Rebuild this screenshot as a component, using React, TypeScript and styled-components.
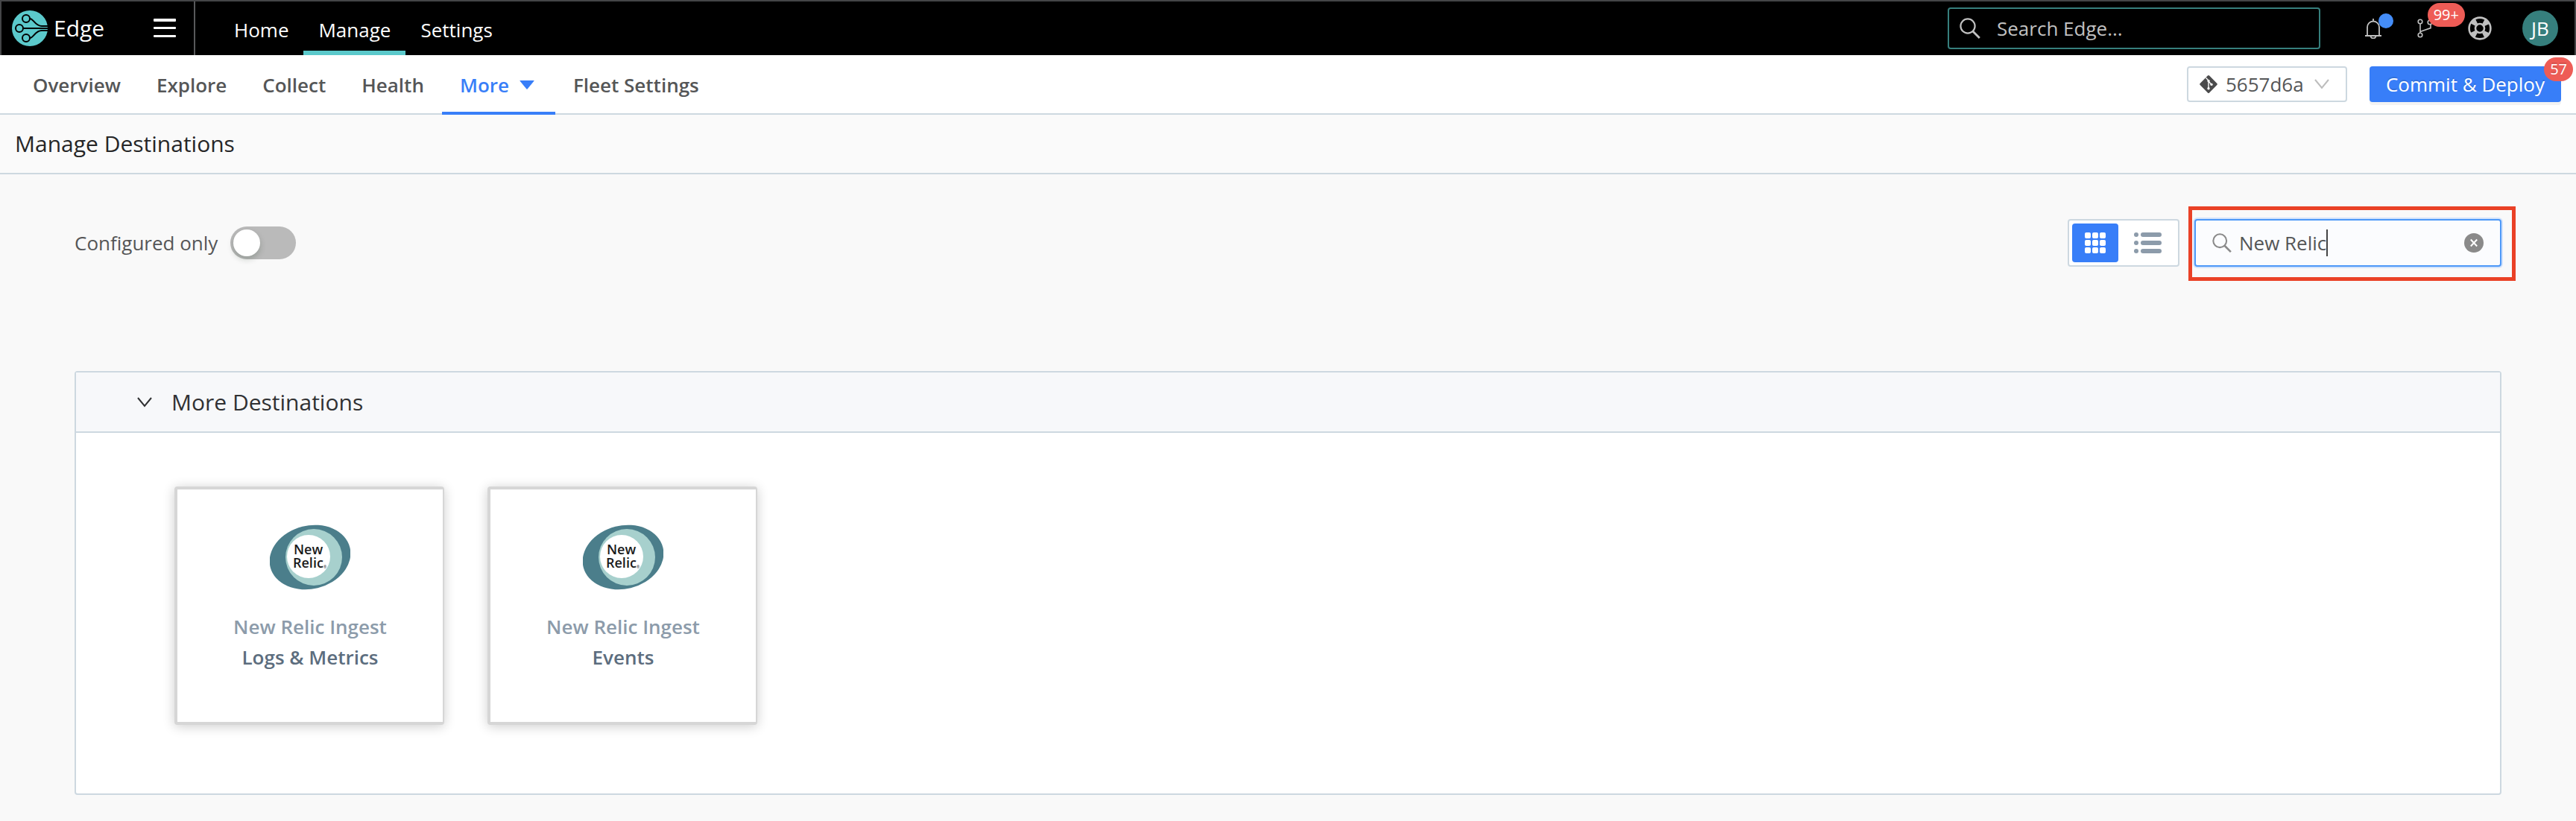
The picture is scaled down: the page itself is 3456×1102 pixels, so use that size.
import React from 'react';
import styled, { createGlobalStyle, css } from 'styled-components';

const color = {
  teal: '#5bc9cb',
  tealDark: '#367f7d',
  blue: '#387ef8',
  line: '#cdd8e0',
  text: '#555657',
  icon: '#c0c0c0',
  red: '#ee5c56',
};

const GlobalStyle = createGlobalStyle`
  *, *::before, *::after { box-sizing: border-box; }
  body {
    margin: 0;
    background: #f9f9f9;
    color: ${color.text};
    font-family: 'Open Sans', 'Noto Sans', sans-serif;
    font-size: 26px;
    line-height: 36px;
  }
  button, input, select { font: inherit; color: inherit; margin: 0; padding: 0; }
  button { cursor: pointer; border: 0; background: none; }
  a { color: inherit; text-decoration: none; }
  svg { display: block; flex: none; }
`;

const TopBar = styled.header`
  display: flex;
  align-items: stretch;
  height: 74px;
  background: #000;
  color: #fff;
  border: 2px solid #444547;
  border-bottom: 0;
`;

const Brand = styled.div`
  display: flex;
  align-items: center;
  justify-content: space-between;
  width: 260px;
  padding: 0 24px 0 14px;
  border-right: 2px solid #58595b;
`;

const BrandLink = styled.a`
  display: flex;
  align-items: center;
  gap: 8px;
  font-size: 30px;
`;

const IconButton = styled.button`
  position: relative;
  display: flex;
  align-items: center;
  justify-content: center;
`;

const MainNav = styled.nav`
  display: flex;
  margin-left: 32px;
`;

const MainLink = styled.a<{ $active?: boolean }>`
  display: flex;
  align-items: center;
  padding: 10px 20px 0;
  border-bottom: 6px solid ${(p) => (p.$active ? color.teal : 'transparent')};
`;

const TopTools = styled.div`
  display: flex;
  align-items: center;
  margin-left: auto;
  padding-right: 22px;
`;

const GlobalSearch = styled.label`
  display: flex;
  align-items: center;
  gap: 22px;
  width: 500px;
  height: 56px;
  padding: 0 14px;
  border: 2px solid ${color.tealDark};
  border-radius: 4px;
  color: ${color.icon};
  input {
    flex: 1;
    min-width: 0;
    border: 0;
    outline: 0;
    background: none;
  }
  input::placeholder { color: inherit; opacity: 1; }
`;

const ToolIcons = styled.div`
  display: flex;
  align-items: center;
  gap: 48px;
  margin: 0 41px 0 60px;
`;

const Dot = styled.span`
  position: absolute;
  top: -6px;
  right: -16px;
  width: 20px;
  height: 20px;
  border-radius: 50%;
  background: #448df8;
`;

const Badge = styled.span<{ $top: number; $right: number }>`
  position: absolute;
  top: ${(p) => p.$top}px;
  right: ${(p) => p.$right}px;
  height: 32px;
  padding: 0 8px;
  border-radius: 16px;
  background: ${color.red};
  color: #fff;
  font-size: 20px;
  line-height: 32px;
`;

const Avatar = styled.button`
  width: 48px;
  height: 48px;
  border-radius: 50%;
  background: ${color.tealDark};
  color: #fff;
`;

const SubBar = styled.div`
  display: flex;
  align-items: stretch;
  justify-content: space-between;
  height: 80px;
  padding: 0 20px;
  background: #fff;
  border-bottom: 2px solid ${color.line};
`;

const Tabs = styled.nav`
  display: flex;
`;

const Tab = styled.a<{ $active?: boolean }>`
  display: flex;
  align-items: center;
  gap: 14px;
  height: 80px;
  padding: 4px 24px 0;
  border-bottom: 4px solid transparent;
  font-weight: 600;
  ${(p) =>
    p.$active &&
    css`
      color: ${color.blue};
      border-color: ${color.blue};
      padding-right: 28px;
    `}
`;

const Actions = styled.div`
  display: flex;
  align-items: center;
  gap: 30px;
`;

const VersionPicker = styled.label`
  display: flex;
  align-items: center;
  gap: 10px;
  width: 215px;
  height: 48px;
  padding: 0 22px 0 14px;
  border: 2px solid ${color.line};
  border-radius: 4px;
  select {
    flex: 1;
    min-width: 0;
    appearance: none;
    border: 0;
    outline: 0;
    background: none;
  }
`;

const Deploy = styled.button`
  position: relative;
  height: 48px;
  padding: 0 22px;
  border-radius: 4px;
  background: ${color.blue};
  color: #fff;
  box-shadow: 0 4px 0 #f3f3f3;
  text-shadow: 0 -2px 0 rgba(0, 0, 0, 0.12);
`;

const TitleBar = styled.div`
  padding: 19px 20px;
  background: #fafafa;
  border-bottom: 2px solid ${color.line};
`;

const PageTitle = styled.h1`
  margin: 0;
  color: #262627;
  font-size: 30px;
  font-weight: 400;
  line-height: 40px;
`;

const Main = styled.main`
  padding: 60px 100px 36px;
`;

const Toolbar = styled.div`
  display: flex;
  align-items: center;
  justify-content: space-between;
  margin-bottom: 140px;
`;

const SwitchLabel = styled.label`
  display: flex;
  align-items: center;
  gap: 17px;
`;

const Switch = styled.input`
  appearance: none;
  display: flex;
  align-items: center;
  width: 88px;
  height: 44px;
  border-radius: 22px;
  background: #bababa;
  cursor: pointer;
  &::before {
    content: '';
    width: 36px;
    height: 36px;
    margin-left: 4px;
    border-radius: 50%;
    background: #fff;
    box-shadow: 0 4px 8px rgba(0, 35, 11, 0.2);
  }
  &:checked { background: ${color.blue}; }
  &:checked::before { margin-left: 48px; }
`;

const ToolGroup = styled.div`
  display: flex;
  align-items: center;
  gap: 20px;
`;

const ViewToggle = styled.div`
  display: flex;
  align-items: center;
  gap: 8px;
  width: 150px;
  height: 64px;
  padding: 4px;
  background: #fff;
  border: 2px solid ${color.line};
  border-radius: 4px;
`;

const ViewButton = styled.button<{ $active?: boolean }>`
  display: flex;
  align-items: center;
  justify-content: center;
  width: 62px;
  height: 52px;
  border-radius: 4px;
  background: ${(p) => (p.$active ? color.blue : 'transparent')};
  color: ${(p) => (p.$active ? '#fff' : '#8c9baa')};
`;

const Highlight = styled.div`
  position: relative;
  &::after {
    content: '';
    position: absolute;
    inset: -17px -19px -19px -8px;
    border: 5px solid #ea4126;
    pointer-events: none;
  }
`;

const Filter = styled.div`
  display: flex;
  align-items: center;
  width: 412px;
  height: 64px;
  padding: 0 22px;
  background: #fbfcfe;
  border: 2px solid #4c98f8;
  border-radius: 4px;
  box-shadow: 0 0 0 2px #d3e3fb;
  > svg { color: #8a8a8a; }
  input {
    field-sizing: content;
    margin-left: 10px;
    border: 0;
    outline: 0;
    background: none;
  }
`;

const Caret = styled.span`
  width: 2px;
  height: 36px;
  background: #444;
`;

const ClearButton = styled(IconButton)`
  margin-left: auto;
`;

const Panel = styled.section`
  background: #fff;
  border: 2px solid ${color.line};
  border-radius: 4px;
`;

const PanelHeader = styled.button`
  display: flex;
  align-items: center;
  gap: 26px;
  width: 100%;
  padding: 20px 82px;
  background: #f7f8fa;
  border-bottom: 2px solid ${color.line};
  color: #303133;
  font-size: 30px;
  line-height: 39px;
`;

const Cards = styled.div`
  display: flex;
  flex-wrap: wrap;
  gap: 58px;
  padding: 72px 132px 92px;
`;

const Card = styled.a`
  display: flex;
  flex-direction: column;
  align-items: center;
  width: 362px;
  height: 320px;
  padding-top: 47px;
  background: #fff;
  border: 4px solid #d6d6d6;
  border-right-width: 2px;
  border-radius: 4px;
  box-shadow: 0 2px 16px rgba(0, 0, 0, 0.2);
  font-weight: 600;
  line-height: 41px;
`;

const CardLogo = styled.div`
  margin-bottom: 29px;
`;

const CardFamily = styled.span`
  color: #8c9baa;
`;

const CardName = styled.span`
  color: #5c6d7e;
`;

const CribLogo = () => (
  <svg width="48" height="48" viewBox="0 0 48 48" aria-hidden="true">
    <circle cx="24" cy="24" r="24" fill={color.teal} />
    <g fill="none" stroke="#000" strokeWidth="2">
      <circle cx="19" cy="11" r="5" />
      <circle cx="10" cy="24" r="5" />
      <circle cx="19" cy="37" r="5" />
      <path d="M24 11c5 0 7 10 16 10h8M24 37c5 0 7-10 16-10h8" />
      <path d="M15 24h33" />
    </g>
  </svg>
);

const MenuIcon = () => (
  <svg width="30" height="26" viewBox="0 0 30 26" aria-hidden="true">
    <g fill="#fff">
      <rect width="30" height="4" rx="1" />
      <rect y="11" width="30" height="3" rx="1" />
      <rect y="22" width="30" height="3" rx="1" />
    </g>
  </svg>
);

const SearchIcon = ({ size }: { size: number }) => (
  <svg width={size} height={size} viewBox="0 0 28 28" fill="none" stroke="currentColor" strokeWidth="2.2" aria-hidden="true">
    <circle cx="11" cy="11" r="9.6" />
    <path d="M17.8 18l9 9" strokeWidth="2.8" />
  </svg>
);

const BellIcon = () => (
  <svg width="22" height="28" viewBox="0 0 22 28" fill="none" stroke={color.icon} strokeWidth="1.8" aria-hidden="true">
    <path d="M11 1v3M3 23.4V12.5a8 8 0 0 1 16 0V23.4M0 24h22M7.5 24.4a3.5 3 0 0 0 7 0" />
  </svg>
);

const BranchIcon = () => (
  <svg width="20" height="26" viewBox="0 0 20 26" fill="none" stroke={color.icon} strokeWidth="1.6" aria-hidden="true">
    <circle cx="4" cy="4" r="2.8" />
    <circle cx="4" cy="22" r="2.8" />
    <circle cx="17" cy="5" r="2.8" />
    <path d="M4 7v12M18 8v4.6L4 17.6" />
  </svg>
);

const LifebuoyIcon = () => (
  <svg width="32" height="32" viewBox="0 0 32 32" fill="none" stroke={color.icon} aria-hidden="true">
    <circle cx="16" cy="16" r="14.4" strokeWidth="2.6" />
    <circle cx="16" cy="16" r="6" strokeWidth="2.6" />
    <circle cx="16" cy="16" r="10.4" strokeWidth="7" strokeDasharray="6.5 9.84" strokeDashoffset="-4.9" />
  </svg>
);

const GitIcon = () => (
  <svg width="26" height="26" viewBox="0 0 26 26" aria-hidden="true">
    <rect x="4.2" y="4.2" width="17.6" height="17.6" rx="1.5" transform="rotate(45 13 13)" fill="#4b4b4c" />
    <path d="M9.5 4.5L13 8v11M13 9l4 4.5" stroke="#fff" strokeWidth="1.4" fill="none" />
    <g fill="#fff">
      <circle cx="13" cy="8.6" r="1.7" />
      <circle cx="13" cy="18.8" r="1.7" />
      <circle cx="17" cy="13.4" r="1.7" />
    </g>
  </svg>
);

const Chevron = ({ stroke, height }: { stroke: string; height: number }) => (
  <svg width="20" height={height} viewBox={`0 0 20 ${height}`} fill="none" stroke={stroke} strokeWidth="2" aria-hidden="true">
    <path d={`M1 1L10 ${height - 2}L19 1`} />
  </svg>
);

const Triangle = () => (
  <svg width="20" height="12" viewBox="0 0 20 12" aria-hidden="true">
    <path d="M1 0h18q1 0 .4.8L10.6 11.4q-.6.6-1.2 0L.6.8Q0 0 1 0z" fill={color.blue} />
  </svg>
);

const GridIcon = () => (
  <svg width="28" height="28" viewBox="0 0 28 28" fill="currentColor" aria-hidden="true">
    {[0, 10, 20].map((y) => [0, 10, 20].map((x) => <rect key={`${x}-${y}`} x={x} y={y} width="8" height="8" rx="2" />))}
  </svg>
);

const ListIcon = () => (
  <svg width="37" height="28" viewBox="0 0 37 28" fill="currentColor" aria-hidden="true">
    {[0, 11, 22].map((y) => (
      <React.Fragment key={y}>
        <rect y={y} width="6" height="6" rx="3" />
        <rect x="9" y={y} width="28" height="6" rx="3" />
      </React.Fragment>
    ))}
  </svg>
);

const ClearIcon = () => (
  <svg width="26" height="26" viewBox="0 0 26 26" aria-hidden="true">
    <circle cx="13" cy="13" r="13" fill="#8a8a8a" />
    <path d="M8.8 8.5l8.4 9M17.2 8.5l-8.4 9" stroke="#fff" strokeWidth="2" />
  </svg>
);

const NewRelicLogo = () => (
  <svg width="108" height="88" viewBox="0 0 108 88" role="img" aria-label="New Relic">
    <ellipse cx="54" cy="44" rx="55" ry="42.5" transform="rotate(-14 54 44)" fill="#4b7e8b" />
    <circle cx="59" cy="44" r="38" fill="#a7d0cd" />
    <circle cx="52" cy="43" r="29" fill="#fff" />
    <g fill="#1a1a1a" fontFamily="'Open Sans', sans-serif" fontSize="18" fontWeight="600">
      <text x="32" y="40">New</text>
      <text x="31" y="58">Relic</text>
      <text x="72" y="59" fontSize="5" fontWeight="400">®</text>
    </g>
  </svg>
);

const tabsBefore = ['Overview', 'Explore', 'Collect', 'Health'];
const destinations = ['Logs & Metrics', 'Events'];

export default function App() {
  return (
    <>
      <GlobalStyle />
      <TopBar>
        <Brand>
          <BrandLink href="#edge">
            <CribLogo />
            Edge
          </BrandLink>
          <IconButton aria-label="Open menu">
            <MenuIcon />
          </IconButton>
        </Brand>
        <MainNav>
          <MainLink href="#home">Home</MainLink>
          <MainLink href="#manage" $active>Manage</MainLink>
          <MainLink href="#settings">Settings</MainLink>
        </MainNav>
        <TopTools>
          <GlobalSearch>
            <SearchIcon size={28} />
            <input type="text" placeholder="Search Edge..." aria-label="Search Edge" />
          </GlobalSearch>
          <ToolIcons>
            <IconButton aria-label="Notifications">
              <BellIcon />
              <Dot />
            </IconButton>
            <IconButton aria-label="Changes">
              <BranchIcon />
              <Badge $top={-21} $right={-44}>99+</Badge>
            </IconButton>
            <IconButton aria-label="Help">
              <LifebuoyIcon />
            </IconButton>
          </ToolIcons>
          <Avatar aria-label="Account JB">JB</Avatar>
        </TopTools>
      </TopBar>

      <SubBar>
        <Tabs>
          {tabsBefore.map((name) => (
            <Tab key={name} href={`#${name.toLowerCase()}`}>{name}</Tab>
          ))}
          <Tab href="#more" $active>
            More
            <Triangle />
          </Tab>
          <Tab href="#fleet-settings">Fleet Settings</Tab>
        </Tabs>
        <Actions>
          <VersionPicker>
            <GitIcon />
            <select aria-label="Version">
              <option>5657d6a</option>
            </select>
            <Chevron stroke="#bdbdbd" height={14} />
          </VersionPicker>
          <Deploy>
            Commit &amp; Deploy
            <Badge $top={-12} $right={-16}>57</Badge>
          </Deploy>
        </Actions>
      </SubBar>

      <TitleBar>
        <PageTitle>Manage Destinations</PageTitle>
      </TitleBar>

      <Main>
        <Toolbar>
          <SwitchLabel>
            Configured only
            <Switch type="checkbox" role="switch" />
          </SwitchLabel>
          <ToolGroup>
            <ViewToggle>
              <ViewButton $active aria-label="Grid view">
                <GridIcon />
              </ViewButton>
              <ViewButton aria-label="List view">
                <ListIcon />
              </ViewButton>
            </ViewToggle>
            <Highlight>
              <Filter>
                <SearchIcon size={26} />
                <input type="text" defaultValue="New Relic" aria-label="Filter destinations" />
                <Caret />
                <ClearButton aria-label="Clear">
                  <ClearIcon />
                </ClearButton>
              </Filter>
            </Highlight>
          </ToolGroup>
        </Toolbar>

        <Panel>
          <PanelHeader aria-expanded="true">
            <Chevron stroke="#303133" height={14} />
            More Destinations
          </PanelHeader>
          <Cards>
            {destinations.map((name) => (
              <Card key={name} href="#destination">
                <CardLogo>
                  <NewRelicLogo />
                </CardLogo>
                <CardFamily>New Relic Ingest</CardFamily>
                <CardName>{name}</CardName>
              </Card>
            ))}
          </Cards>
        </Panel>
      </Main>
    </>
  );
}
